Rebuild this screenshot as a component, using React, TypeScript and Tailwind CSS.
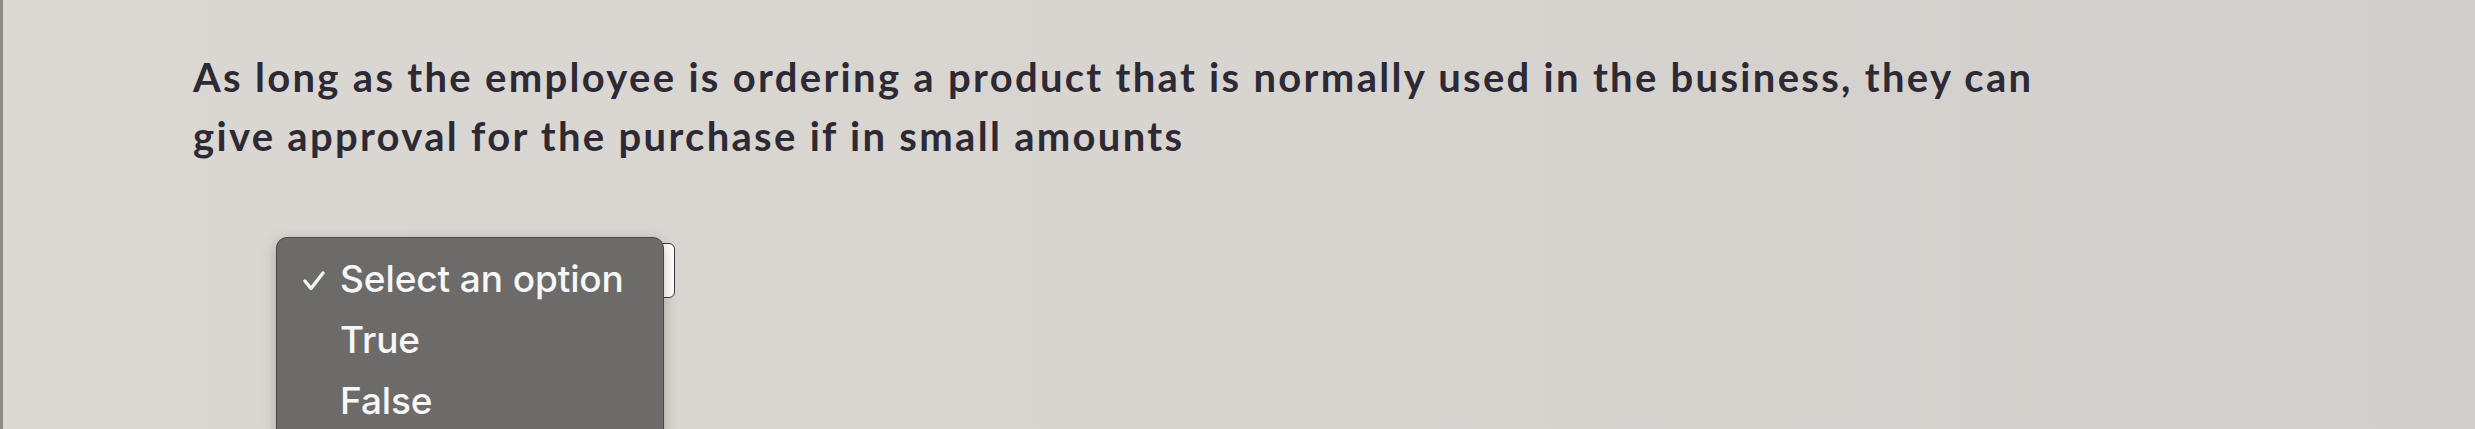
import React, { useState } from 'react';

const options = ['Select an option', 'True', 'False'];

const CheckMark = () => (
  <svg width="22" height="20" viewBox="0 0 22 20" fill="none">
    <path
      d="M2 10 L8 17.5 L20 2"
      stroke="#f4f4f4"
      strokeWidth="3.4"
      strokeLinecap="round"
      strokeLinejoin="round"
    />
  </svg>
);

const OptionMenu = ({ selected }: { selected: number }) => (
  <div className="absolute left-[-10px] top-[-7px] w-[388px] h-[210px] rounded-t-[11px] border border-[#4b4948] bg-[#6d6b6a] pt-[10px] shadow-[0_4px_14px_rgba(0,0,0,0.25)]">
    {options.map((opt, i) => (
      <div
        key={opt}
        className="flex h-[61px] items-center leading-[61px] text-[37px] font-medium text-[#f7f7f7] tracking-[-0.1px]"
        style={{ fontFamily: 'Inter, "Liberation Sans", sans-serif' }}
      >
        <span className="flex w-[63px] justify-end pr-[15px] pt-[4px]">
          {i === selected && <CheckMark />}
        </span>
        <span>{opt}</span>
      </div>
    ))}
  </div>
);

export default function App() {
  const [selected] = useState(0);

  return (
    <div className="relative h-[429px] w-[2475px] overflow-hidden bg-gradient-to-r from-[#dbd8d4] via-[#d8d5d1] to-[#d1cecb]">
      <div className="absolute left-0 top-0 h-full w-[3px] bg-[#8d8a87]" />
      <div className="flex flex-col pl-[193px] pt-[48px]">
        <p
          className="w-[2000px] text-[40px] font-bold leading-[59px] tracking-[2.3px] text-[#2d2a35]"
          style={{ fontFamily: 'Lato, "Noto Sans", sans-serif' }}
        >
          As long as the employee is ordering a product that is normally used in the business, they can
          <br />
          give approval for the purchase if in small amounts
        </p>
        <div className="relative ml-[92px] mt-[77px] h-[55px] w-[390px] rounded-[6px] border border-[#3d3b3b] bg-white">
          <OptionMenu selected={selected} />
        </div>
      </div>
    </div>
  );
}
